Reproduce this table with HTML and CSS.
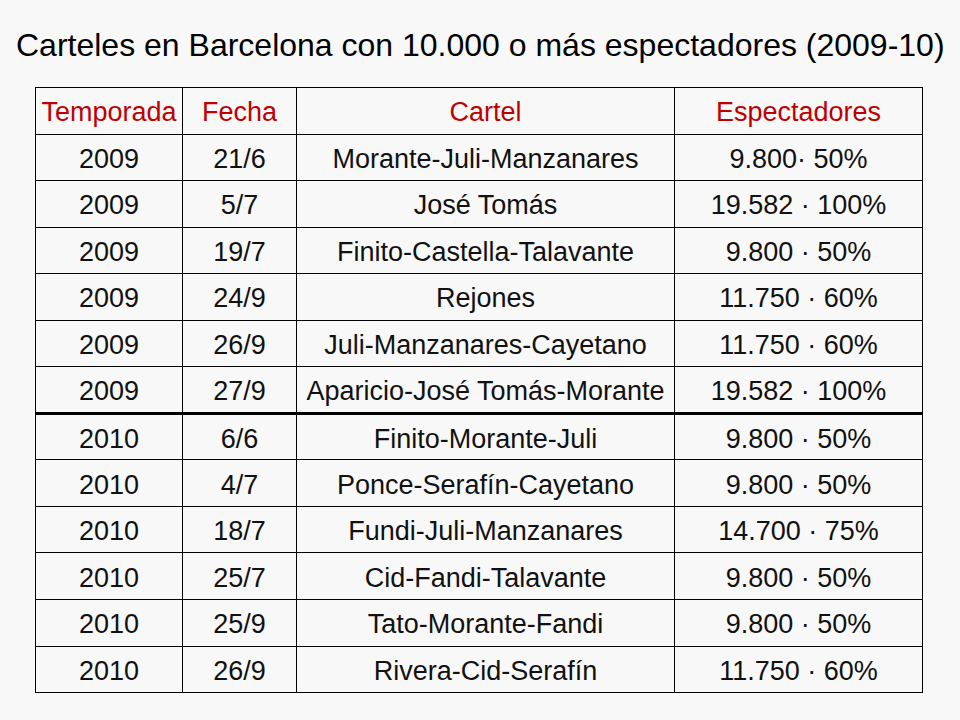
FILE: index.html
```html
<!DOCTYPE html>
<html lang="es">
<head>
<meta charset="utf-8">
<link rel="stylesheet" href="styles.css">
</head>
<body>
<div class="slide">
  <h1 class="title">Carteles en Barcelona con 10.000 o más espectadores (2009-10)</h1>
  <table class="grid">
    <colgroup>
      <col class="c1"><col class="c2"><col class="c3"><col class="c4">
    </colgroup>
    <thead>
      <tr><th>Temporada</th><th>Fecha</th><th>Cartel</th><th>Espectadores</th></tr>
    </thead>
    <tbody>
      <tr><td>2009</td><td>21/6</td><td>Morante-Juli-Manzanares</td><td>9.800· 50%</td></tr>
      <tr><td>2009</td><td>5/7</td><td>José Tomás</td><td>19.582 · 100%</td></tr>
      <tr><td>2009</td><td>19/7</td><td>Finito-Castella-Talavante</td><td>9.800 · 50%</td></tr>
      <tr><td>2009</td><td>24/9</td><td>Rejones</td><td>11.750 · 60%</td></tr>
      <tr><td>2009</td><td>26/9</td><td>Juli-Manzanares-Cayetano</td><td>11.750 · 60%</td></tr>
      <tr class="last09"><td>2009</td><td>27/9</td><td>Aparicio-José Tomás-Morante</td><td>19.582 · 100%</td></tr>
      <tr><td>2010</td><td>6/6</td><td>Finito-Morante-Juli</td><td>9.800 · 50%</td></tr>
      <tr><td>2010</td><td>4/7</td><td>Ponce-Serafín-Cayetano</td><td>9.800 · 50%</td></tr>
      <tr><td>2010</td><td>18/7</td><td>Fundi-Juli-Manzanares</td><td>14.700 · 75%</td></tr>
      <tr><td>2010</td><td>25/7</td><td>Cid-Fandi-Talavante</td><td>9.800 · 50%</td></tr>
      <tr><td>2010</td><td>25/9</td><td>Tato-Morante-Fandi</td><td>9.800 · 50%</td></tr>
      <tr><td>2010</td><td>26/9</td><td>Rivera-Cid-Serafín</td><td>11.750 · 60%</td></tr>
    </tbody>
  </table>
</div>
</body>
</html>
```
FILE: styles.css
```css
html, body {
  margin: 0;
  padding: 0;
  background: #f8f8f8;
}
.slide {
  width: 960px;
  height: 720px;
  padding: 28px 0 0 35px;
  box-sizing: border-box;
  font-family: "Liberation Sans", Arial, sans-serif;
  color: #000;
}
.title {
  margin: 0 0 25px -19px;
  font-weight: normal;
  font-size: 32px;
  line-height: 34px;
  white-space: nowrap;
}
.grid {
  border-collapse: collapse;
  table-layout: fixed;
  width: 887px;
}
.c1 { width: 147px; }
.c2 { width: 114px; }
.c3 { width: 378px; }
.c4 { width: 248px; }
.grid th, .grid td {
  border: 1px solid #000;
  height: 46.55px;
  padding: 3px 0 0;
  box-sizing: border-box;
  text-align: center;
  font-size: 27px;
  font-weight: normal;
  line-height: 30px;
  white-space: nowrap;
  color: #111;
}
.grid th {
  color: #c00000;
}
.grid tr.last09 td {
  border-bottom: 3px solid #000;
}
```
